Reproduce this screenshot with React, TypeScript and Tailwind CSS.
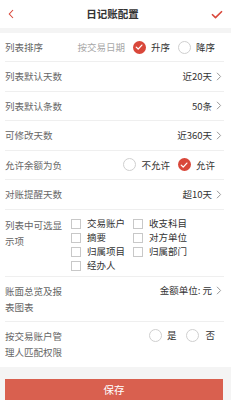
import React from 'react';

const FONT = { fontFamily: '"Noto Sans CJK SC", "Noto Sans", sans-serif' };

function Radio({ checked }: { checked?: boolean }) {
  if (checked) {
    return (
      <span className="w-[13px] h-[13px] rounded-full bg-[#d9473a] flex items-center justify-center shrink-0">
        <svg width="8" height="8" viewBox="0 0 10 10" fill="none">
          <path d="M1.5 5.2 L4 7.6 L8.6 2.6" stroke="#fff" strokeWidth="1.6" strokeLinecap="round" strokeLinejoin="round" />
        </svg>
      </span>
    );
  }
  return <span className="w-[13px] h-[13px] rounded-full border border-[#cfcfcf] bg-white shrink-0" />;
}

function Chevron() {
  return (
    <svg width="6" height="9" viewBox="0 0 6 9" fill="none" className="ml-[4px] shrink-0">
      <path d="M1 0.8 L4.6 4.5 L1 8.2" stroke="#9a9a9a" strokeWidth="1" />
    </svg>
  );
}

function Check({ label }: { label: string }) {
  return (
    <div className="flex items-center h-[14px] w-[62px]">
      <span className="w-[10px] h-[10px] border border-[#c8c8c8] bg-white shrink-0" />
      <span className="ml-[6px] text-[9.5px] text-[#333] whitespace-nowrap">{label}</span>
    </div>
  );
}

function ValueRow({ label, value }: { label: string; value: string }) {
  return (
    <div className="h-[29.5px] flex items-center justify-between border-b border-[#efefef] pr-[2px]">
      <span className="text-[9.5px] text-[#666]">{label}</span>
      <div className="flex items-center">
        <span className="text-[9.5px] text-[#333]">{value}</span>
        <Chevron />
      </div>
    </div>
  );
}

export default function App() {
  return (
    <div className="w-[231px] h-[400px] bg-[#f4f4f4] flex flex-col overflow-hidden" style={FONT}>
      <header className="h-[28px] bg-white flex items-center justify-between px-[8px] shrink-0">
        <svg width="6" height="10" viewBox="0 0 6 10" fill="none">
          <path d="M5 1 L1.3 5 L5 9" stroke="#d9473a" strokeWidth="1.1" />
        </svg>
        <span className="text-[10.5px] font-semibold text-[#333]">日记账配置</span>
        <svg width="12" height="9" viewBox="0 0 12 9" fill="none">
          <path d="M1 4.2 L4.5 7.6 L11 1.2" stroke="#d9473a" strokeWidth="1.6" strokeLinejoin="round" />
        </svg>
      </header>

      <div className="mt-[5px] bg-white pl-[5px] pr-[7px]">
        <div className="h-[29px] flex items-center border-b border-[#efefef]">
          <span className="text-[9.5px] text-[#666]">列表排序</span>
          <div className="ml-auto flex items-center pr-[9px]">
            <span className="text-[9.5px] text-[#a8a8a8]">按交易日期</span>
            <div className="ml-[8px] flex items-center">
              <Radio checked />
              <span className="ml-[5px] text-[9.5px] text-[#333]">升序</span>
            </div>
            <div className="ml-[8px] flex items-center">
              <Radio />
              <span className="ml-[5px] text-[9.5px] text-[#333]">降序</span>
            </div>
          </div>
        </div>

        <ValueRow label="列表默认天数" value="近20天" />
        <ValueRow label="列表默认条数" value="50条" />
        <ValueRow label="可修改天数" value="近360天" />

        <div className="h-[29.5px] flex items-center border-b border-[#efefef]">
          <span className="text-[9.5px] text-[#666]">允许余额为负</span>
          <div className="ml-auto flex items-center pr-[9px]">
            <Radio />
            <span className="ml-[5px] text-[9.5px] text-[#333]">不允许</span>
            <div className="ml-[8px] flex items-center">
              <Radio checked />
              <span className="ml-[5px] text-[9.5px] text-[#333]">允许</span>
            </div>
          </div>
        </div>

        <ValueRow label="对账提醒天数" value="超10天" />

        <div className="h-[67px] flex border-b border-[#efefef] pt-[7px]">
          <span className="w-[58px] text-[9.5px] leading-[16px] text-[#666]">列表中可选显示项</span>
          <div className="ml-[8px] grid grid-cols-[62px_62px] content-start">
            <Check label="交易账户" />
            <Check label="收支科目" />
            <Check label="摘要" />
            <Check label="对方单位" />
            <Check label="归属项目" />
            <Check label="归属部门" />
            <Check label="经办人" />
          </div>
        </div>

        <div className="h-[45px] flex items-start justify-between border-b border-[#efefef] pt-[6px] pr-[2px]">
          <span className="w-[58px] text-[9.5px] leading-[16px] text-[#666]">账面总览及报表图表</span>
          <div className="flex items-center h-[16px]">
            <span className="text-[9.5px] text-[#333]">金额单位: 元</span>
            <Chevron />
          </div>
        </div>

        <div className="h-[45px] flex items-start pt-[6px]">
          <span className="w-[58px] text-[9.5px] leading-[16px] text-[#666]">按交易账户管理人匹配权限</span>
          <div className="ml-auto flex items-center h-[16px] pr-[9px]">
            <Radio />
            <span className="ml-[5px] text-[9.5px] text-[#333]">是</span>
            <div className="ml-[10px] flex items-center">
              <Radio />
              <span className="ml-[6px] text-[9.5px] text-[#333]">否</span>
            </div>
          </div>
        </div>
      </div>

      <div className="px-[5px] pr-[8px] mt-[12px]">
        <button className="w-full h-[26px] bg-[#d9604f] text-white text-[10.5px] flex items-center justify-center pb-[4px]">
          保存
        </button>
      </div>
    </div>
  );
}
